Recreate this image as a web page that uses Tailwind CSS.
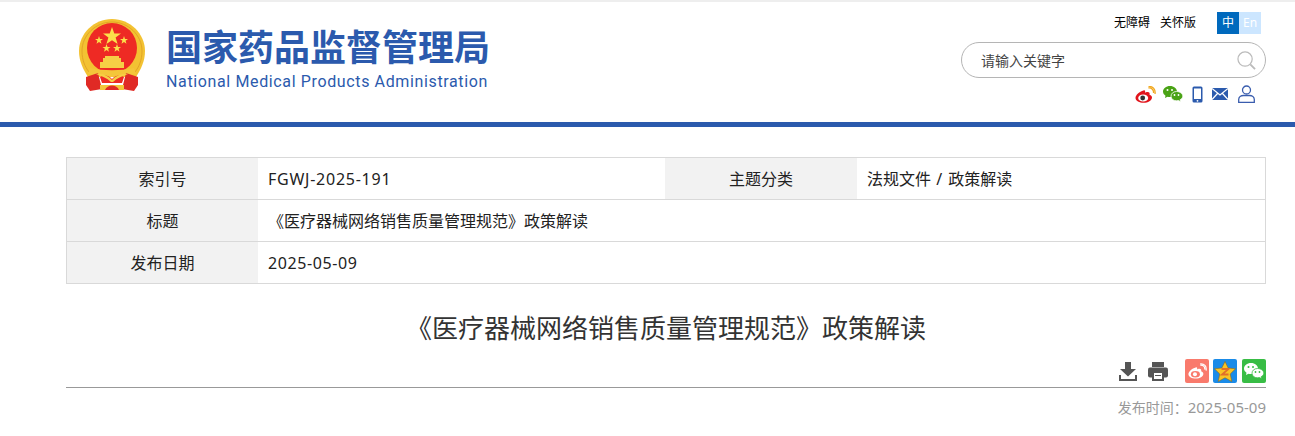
<!doctype html>
<html lang="zh-CN">

<head>
    <meta charset="UTF-8" />
    <meta name="viewport" content="width=device-width, initial-scale=1.0" />
    <title>《医疗器械网络销售质量管理规范》政策解读</title>
    <script src="https://cdn.jsdelivr.net/npm/@tailwindcss/browser@4"></script>
</head>

<body class="bg-white text-black overflow-hidden font-['Noto_Sans','Noto_Sans_CJK_SC',sans-serif]">
    <header class="h-[127px] border-t-2 border-b-[5px] border-t-[#eeeeee] border-b-[#2b5aad] flex">
        <div class="w-[1200px] ml-[66px] flex justify-between">
            <div class="flex items-start">
                <svg class="ml-[13px] mt-[17px]" width="66" height="72" viewBox="0 0 66 72">
                    <path d="M33 0C14.800 0 0 14.800 0 32C0 42 4 50 9 58L57 58C62 50 66 42 66 32C66 14.800 51.200 0 33 0Z" fill="#f3c232" />
                    <path d="M33 3C17 3 3 16 3 32C3 41 6 48 10 53" fill="none" stroke="#e2a526" stroke-width="1" />
                    <path d="M33 3C49 3 63 16 63 32C63 41 60 48 56 53" fill="none" stroke="#e2a526" stroke-width="1" />
                    <circle cx="33" cy="29" r="25" fill="#ee2a24" />
                    <polygon points="33,8 35.300,14.500 42,14.500 36.600,18.600 38.600,25 33,21.200 27.400,25 29.400,18.600 24,14.500 30.700,14.500" fill="#fbe14a" />
                    <polygon points="20,17 21,20 24,20 21.600,21.800 22.500,24.800 20,23 17.500,24.800 18.400,21.800 16,20 19,20" fill="#fbe14a" />
                    <polygon points="45,17 46,20 49,20 46.600,21.800 47.500,24.800 45,23 42.500,24.800 43.400,21.800 41,20 44,20" fill="#fbe14a" />
                    <polygon points="27.500,25 28.500,28 31.500,28 29.100,29.800 30,32.800 27.500,31 25,32.800 25.900,29.800 23.500,28 26.500,28" fill="#fbe14a" />
                    <polygon points="38,25 39,28 42,28 39.600,29.800 40.500,32.800 38,31 35.500,32.800 36.400,29.800 34,28 37,28" fill="#fbe14a" />
                    <path d="M26 37H40V39H42V43H45V49H21V43H24V39H26Z" fill="#f6cf45" />
                    <path d="M11 49C24 52 42 52 55 49L57 55C42 59 24 59 9 55Z" fill="#f4c63a" />
                    <path d="M7 58L19 54L23 70L11 72L7 66Z" fill="#e02a25" />
                    <path d="M59 58L47 54L43 70L55 72L59 66Z" fill="#e02a25" />
                    <path d="M21 58C26 55 30 57 33 60C36 57 40 55 45 58L43 64H23Z" fill="#ee2a24" />
                    <path d="M17 55C22 54 30 57 33 61C36 57 44 54 49 55C44 57 38 59 34 63H32C28 59 22 57 17 55Z" fill="#f6cf45" />
                    <path d="M21 66H45V71H21Z" fill="#f4c63a" />
                    <path d="M26 71C28 65 38 65 40 71Z" fill="#e02a25" />
                </svg>
                <div class="ml-[21px] mt-[28px] text-[#2b5aad]">
                    <div class="text-[36px] leading-[36px] font-bold whitespace-nowrap">国家药品监督管理局</div>
                    <div class="mt-[6px] text-[16px] leading-[20px] tracking-[0.63px] whitespace-nowrap font-['Roboto',sans-serif]">National Medical Products Administration</div>
                </div>
            </div>
            <div class="flex flex-col items-end">
                <div class="flex items-center mt-[10px] text-[12px] leading-[22px]">
                    <span>无障碍</span>
                    <span class="ml-[10px]">关怀版</span>
                    <div class="flex ml-[21px] mr-[5px]">
                        <span class="w-[22px] h-[22px] bg-[#0069bd] text-white text-center">中</span>
                        <span class="w-[22px] h-[22px] bg-[#cce6ff] text-white text-center">En</span>
                    </div>
                </div>
                <div class="mt-[8px] w-[305px] h-[36px] border border-[#b5b5b5] rounded-[18px] flex items-center justify-between pl-[19px] pr-[9px]">
                    <span class="text-[14px] text-[#444444]">请输入关键字</span>
                    <svg width="19" height="19" viewBox="0 0 20 20" fill="none" stroke="#bbbbbb">
                        <circle cx="8.500" cy="8.500" r="7.500" stroke-width="1.300" />
                        <path d="M14 14L19 19" stroke-width="2" />
                    </svg>
                </div>
                <div class="mt-[7px] flex items-center gap-[7px] mr-[11px]">
                    <svg width="21" height="17" viewBox="0 0 21 17">
                        <path d="M8.500 4.500C4.500 5.500 0.500 9 0.500 12C0.500 15 4.500 16.800 8.500 16.800C13 16.800 17 14.500 17 11.500C17 9.800 15 9 14.500 8.800C15 7.300 14.500 6 12.500 6C11.500 6 10.500 6.500 10 6.500C10.500 5 10 4 8.500 4.500Z" fill="#e1141b" />
                        <ellipse cx="8.200" cy="12" rx="5" ry="3.600" fill="#ffffff" />
                        <circle cx="7.700" cy="12" r="2.400" fill="#333333" />
                        <path d="M13.500 2C16.500 1.500 19 4 18.500 7M13.500 0.500C18 0 20.800 3.500 20 8" fill="none" stroke="#f1a81e" stroke-width="1.300" />
                    </svg>
                    <svg width="20" height="16" viewBox="0 0 20 16">
                        <path d="M7 0C3 0 0 2.500 0 5.500C0 7.300 1 8.700 2.500 9.700L2 12L4.500 10.700C5.300 10.900 6 11 7 11C11 11 14 8.500 14 5.500C14 2.500 11 0 7 0Z" fill="#4aa316" />
                        <path d="M13.500 5.500C10.300 5.500 8 7.600 8 10.200C8 12.800 10.300 14.800 13.500 14.800C14.200 14.800 14.800 14.700 15.500 14.500L17.800 15.800L17.200 13.700C18.800 12.800 19.800 11.600 19.800 10.200C19.800 7.600 16.800 5.500 13.500 5.500Z" fill="#4aa316" stroke="#ffffff" stroke-width="0.800" />
                        <circle cx="4.500" cy="4" r="1" fill="#ffffff" />
                        <circle cx="9" cy="4" r="1" fill="#ffffff" />
                        <circle cx="11.500" cy="9" r="0.900" fill="#ffffff" />
                        <circle cx="15.500" cy="9" r="0.900" fill="#ffffff" />
                    </svg>
                    <svg class="ml-[2px]" width="11" height="17" viewBox="0 0 11 17">
                        <rect x="0.500" y="0.500" width="10" height="16" rx="1.500" fill="#2b5aad" />
                        <rect x="2" y="2.500" width="7" height="10.500" fill="#ffffff" />
                        <circle cx="5.500" cy="14.800" r="0.900" fill="#ffffff" />
                    </svg>
                    <svg class="ml-[2px]" width="16" height="12" viewBox="0 0 16 12">
                        <rect width="16" height="12" fill="#2b5aad" />
                        <path d="M0 0.500L8 7L16 0.500M0 11.500L5.500 5.500M16 11.500L10.500 5.500" fill="none" stroke="#ffffff" stroke-width="1.200" />
                    </svg>
                    <svg class="ml-[3px]" width="17" height="18" viewBox="0 0 17 18" fill="none" stroke="#3a5dae" stroke-width="1.300">
                        <circle cx="8.500" cy="5" r="4" />
                        <path d="M0.700 17.300V14.500C0.700 12 3 10.500 5.500 10.500H11.500C14 10.500 16.300 12 16.300 14.500V17.300Z" />
                    </svg>
                </div>
            </div>
        </div>
    </header>

    <main class="w-[1200px] ml-[66px]">
        <div class="mt-[30px] border border-[#d9d9d9] text-[16px] text-[#222222]">
            <div class="flex h-[42px] border-b border-[#d9d9d9]">
                <div class="w-[191px] bg-[#f2f2f2] flex items-center justify-center">索引号</div>
                <div class="w-[407px] pl-[10px] flex items-center tracking-[0.75px]">FGWJ-2025-191</div>
                <div class="w-[192px] bg-[#f2f2f2] flex items-center justify-center">主题分类</div>
                <div class="flex-1 pl-[10px] flex items-center whitespace-pre">法规文件<span class="tracking-[1px]"> / </span>政策解读</div>
            </div>
            <div class="flex h-[42px] border-b border-[#d9d9d9]">
                <div class="w-[191px] bg-[#f2f2f2] flex items-center justify-center">标题</div>
                <div class="flex-1 pl-[10px] flex items-center">《医疗器械网络销售质量管理规范》政策解读</div>
            </div>
            <div class="flex h-[41px]">
                <div class="w-[191px] bg-[#f2f2f2] flex items-center justify-center">发布日期</div>
                <div class="flex-1 pl-[10px] flex items-center tracking-[0.6px]">2025-05-09</div>
            </div>
        </div>

        <h1 class="mt-[24px] text-center text-[26px] leading-[40px] text-[#333333]">《医疗器械网络销售质量管理规范》政策解读</h1>

        <div class="mt-[11px] h-[29px] border-b border-[#999999] flex justify-end items-start">
            <svg class="mt-[3px]" width="18" height="19" viewBox="0 0 18 19" fill="#555555">
                <path d="M6 0H12V7H17L9 14.500L1 7H6Z" />
                <path d="M0 13H2V17H16V13H18V19H0Z" />
            </svg>
            <svg class="ml-[11px] mt-[3px]" width="20" height="19" viewBox="0 0 20 19">
                <rect x="4" y="0" width="12" height="5" fill="#555555" />
                <rect x="0" y="5.500" width="20" height="10" rx="2" fill="#555555" />
                <rect x="4" y="10" width="12" height="9" fill="#555555" />
                <rect x="6" y="11" width="8" height="6" fill="#ffffff" />
                <rect x="7" y="13" width="6" height="1" fill="#555555" />
            </svg>
            <div class="ml-[17px] w-[24px] h-[24px] rounded-[2px] bg-[#f97a6c] flex items-center justify-center">
                <svg width="19" height="16" viewBox="0 0 21 17">
                    <path d="M8.500 4.500C4.500 5.500 0.500 9 0.500 12C0.500 15 4.500 16.800 8.500 16.800C13 16.800 17 14.500 17 11.500C17 9.800 15 9 14.500 8.800C15 7.300 14.500 6 12.500 6C11.500 6 10.500 6.500 10 6.500C10.500 5 10 4 8.500 4.500Z" fill="#ffffff" />
                    <ellipse cx="8.200" cy="12" rx="5" ry="3.600" fill="#f97a6c" />
                    <circle cx="7.700" cy="12" r="2.200" fill="#ffffff" />
                    <path d="M13.500 2C16.500 1.500 19 4 18.500 7M13.500 0.500C18 0 20.800 3.500 20 8" fill="none" stroke="#ffffff" stroke-width="1.300" />
                </svg>
            </div>
            <div class="ml-[4px] w-[24px] h-[24px] rounded-[2px] bg-[#1a8be8] flex items-center justify-center">
                <svg width="22" height="21" viewBox="0 0 22 21">
                    <polygon points="11,0.500 14.200,7 21.500,7.800 16.200,13 17.800,20.500 11,16.800 4.200,20.500 5.800,13 0.500,7.800 7.800,7" fill="#f7c325" stroke="#8a6a20" stroke-width="0.600" />
                    <path d="M7.500 8H14.500L8 13.500H14.500" fill="none" stroke="#e0702a" stroke-width="1.800" />
                </svg>
            </div>
            <div class="ml-[5px] w-[24px] h-[24px] rounded-[2px] bg-[#38bd45] flex items-center justify-center">
                <svg width="20" height="16" viewBox="0 0 20 16">
                    <path d="M7 0C3 0 0 2.500 0 5.500C0 7.300 1 8.700 2.500 9.700L2 12L4.500 10.700C5.300 10.900 6 11 7 11C11 11 14 8.500 14 5.500C14 2.500 11 0 7 0Z" fill="#ffffff" />
                    <path d="M13.500 5.500C10.300 5.500 8 7.600 8 10.200C8 12.800 10.300 14.800 13.500 14.800C14.200 14.800 14.800 14.700 15.500 14.500L17.800 15.800L17.200 13.700C18.800 12.800 19.800 11.600 19.800 10.200C19.800 7.600 16.800 5.500 13.500 5.500Z" fill="#ffffff" stroke="#38bd45" stroke-width="0.800" />
                    <circle cx="4.500" cy="4" r="1" fill="#38bd45" />
                    <circle cx="9" cy="4" r="1" fill="#38bd45" />
                    <circle cx="11.500" cy="9" r="0.900" fill="#38bd45" />
                    <circle cx="15.500" cy="9" r="0.900" fill="#38bd45" />
                </svg>
            </div>
        </div>

        <div class="mt-[9px] text-right text-[14px] leading-[20px] text-[#999999]">发布时间：<span class="text-[15px]">2025-05-09</span></div>
    </main>
</body>

</html>
